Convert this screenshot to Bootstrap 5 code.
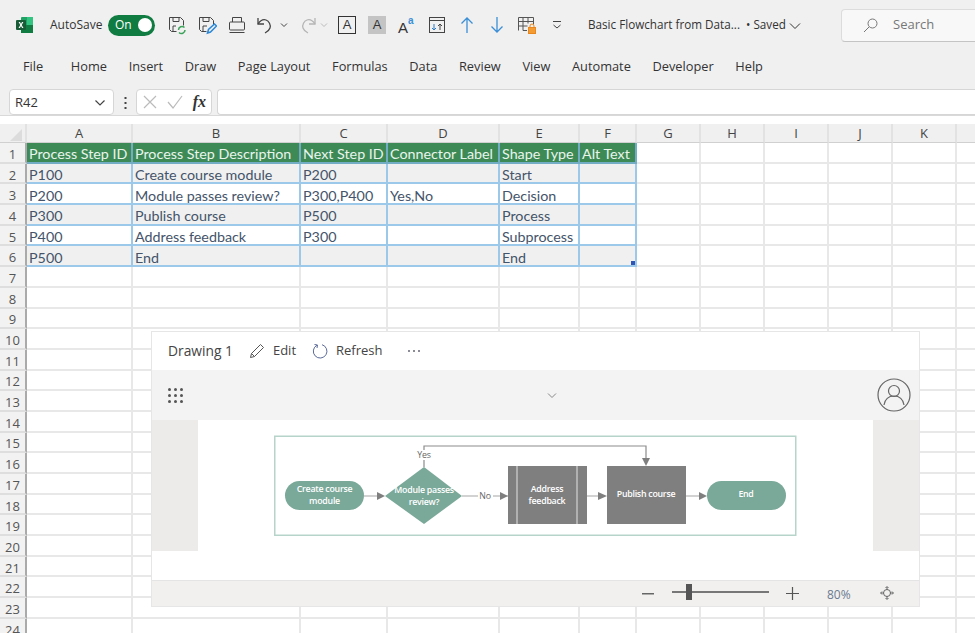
<!DOCTYPE html>
<html>

<head>
  <title>Basic Flowchart from Data</title>
  <link href="https://cdn.jsdelivr.net/npm/bootstrap@5.3.2/dist/css/bootstrap.min.css" rel="stylesheet">
  <script src="https://cdn.jsdelivr.net/npm/bootstrap@5.3.2/dist/js/bootstrap.bundle.min.js"></script>
  <style>
    html, body { height: 633px; overflow: hidden; }
    body { background: #f0f0f0; font-family: "Open Sans", "Noto Sans", sans-serif; color: #333; }

    .title-row { height: 48px; padding: 2px 0 0 16px; font-size: 12px; overflow: hidden; }
    .tb-cell { flex: none; width: 30px; display: flex; justify-content: center; align-items: center; }
    .tb-cell svg { display: block; flex: none; }
    .tb-small { width: 12px; }
    .tb-undo { width: 26px; }
    .tb-redo { width: 26px; margin-left: 5px; }
    .tb-redo-chev { width: 6px; margin-right: 5px; }
    .tb-group { margin-left: 7px; }
    .autosave-label { margin-left: 16px; width: 58px; flex: none; }
    .toggle-pill { flex: none; width: 47px; height: 21px; border-radius: 11px; background: #107c41; color: #fff; padding: 0 3px 0 7px; font-size: 12px; }
    .toggle-knob { width: 14px; height: 14px; border-radius: 50%; background: #fff; }
    .font-box { width: 18px; height: 18px; font-size: 13px; line-height: 16px; text-align: center; font-family: "Liberation Sans", sans-serif; color: #333; }
    .font-box-outline { border: 1px solid #333; }
    .font-box-filled { background: #c4c4c4; line-height: 18px; }
    .doc-name { margin-left: 16px; width: 253px; flex: none; white-space: nowrap; font-size: 11.700px; }
    .search-box { width: 140px; height: 33px; flex: none; background: #f8f8f8; border: 1px solid #dcdcdc; border-bottom-color: #c4c4c4; border-radius: 4px; color: #777; font-size: 13px; padding-left: 21px; gap: 14px; }

    .menu-row { height: 41px; padding: 0 0 4px 23px; gap: 21.600px; font-size: 12.800px; }
    .menu-row span:first-child { margin-right: 6px; }

    .formula-row { height: 27px; padding-left: 9px; border-bottom: 1px solid #d9d9d9; }
    .formula-box { background: #fff; border: 1px solid #d6d6d6; border-radius: 4px; height: 26px; }
    .name-box { width: 105px; padding: 2px 7px 0 5px; font-size: 13px; }
    .sep-dots { width: 22px; text-align: center; }
    .fx-box { width: 76px; padding: 0 5px 0 5px; }
    .fx-label { font-family: "Liberation Serif", serif; font-style: italic; font-weight: 700; font-size: 16px; color: #333; }
    .input-box { margin-left: 5px; flex: 1; border-right: 0; border-radius: 4px 0 0 4px; }

    .sheet-area { position: relative; background: #fff; height: 517px; padding-top: 8px; overflow: hidden; }
    .sheet { table-layout: fixed; border-collapse: separate; border-spacing: 0; width: 1021px; font-family: "Lato", "Open Sans", sans-serif; font-size: 14.300px; color: #44546a; }
    .sheet th, .sheet td { height: 20.700px; padding: 4px 0 0 2px; border-right: 2px solid #e8e8e8; border-bottom: 2px solid #e8e8e8; white-space: nowrap; overflow: hidden; line-height: 1; font-weight: 400; }
    .sheet thead th { height: 19px; background: #f0f0f0; color: #444; text-align: center; padding: 1px 0 0; border-bottom: 1px solid #d0d0d0; border-right-color: #e2e2e2; font-family: "Open Sans", sans-serif; font-size: 13px; }
    .sheet .row-head { background: #f2f2f2; color: #555; text-align: center; padding: 4px 0 0; border-right: 2px solid #aaa; border-bottom-color: #dedede; font-family: "Open Sans", sans-serif; font-size: 13px; font-weight: 500; }
    .sheet .data-cell { border-right: 2px solid #9cc8ea; border-bottom: 2px solid #9cc8ea; }
    .sheet .hdr-cell { background: #3d8a57; color: #e9f5ec; border-right: 2px solid #73acc5; border-bottom: 2px solid #73acc5; }
    .sheet .band-cell { background: #f0f0f0; }
    .corner-cell { position: relative; }
    .corner-handle { position: absolute; right: 0; bottom: 0; width: 4px; height: 4px; background: #2f55b5; }

    .drawing-panel { position: absolute; left: 151px; top: 215px; width: 769px; height: 276px; background: #fff; border: 1px solid #e6e6e6; color: #444; font-size: 13px; display: flex; flex-direction: column; }
    .panel-head { height: 38px; padding-left: 16px; flex: none; }
    .panel-title { font-size: 13.800px; }
    .panel-bar { height: 50px; background: #f3f3f3; flex: none; padding: 0 8px 0 16px; }
    .bar-chevron { margin-left: 44px; }
    .launcher { width: 15px; height: 15px; display: grid; grid-template-columns: repeat(3, 3px); gap: 3px; }
    .launcher i { width: 3px; height: 3px; border-radius: 50%; background: #555; }
    .canvas-area { height: 131px; flex: none; }
    .canvas-side { width: 46px; background: #ecebe9; flex: none; }
    .canvas-mid { flex: 1; }
    .canvas-gap { height: 29px; flex: none; }
    .panel-foot { flex: 1; background: #f1f0ef; border-top: 1px solid #e4e4e4; color: #6b7a90; font-size: 12px; }
    .foot-minus { left: 490px; top: 12px; }
    .foot-plus { left: 634px; top: 6px; }
    .foot-pct { left: 675px; top: 5px; }
    .foot-fit { left: 728px; top: 5px; }
    .zoom-track { position: absolute; left: 520px; top: 259px; width: 97px; height: 2px; background: #777; }
    .zoom-thumb { position: absolute; left: 14px; top: -7px; width: 6px; height: 16px; background: #555; }
    .flow-svg { position: absolute; left: 123px; top: 104px; overflow: visible; }
    .flow-svg text { font-family: "Open Sans", sans-serif; font-size: 8.800px; letter-spacing: -0.250px; }
    .flow-white text { font-weight: 600; }
  </style>
</head>

<body>
  <header>
    <div class="title-row d-flex align-items-center">
      <svg width="18" height="18" viewBox="0 0 18 18" class="flex-shrink-0">
        <rect x="5" y="1" width="12" height="16" rx="1" fill="#21a366" />
        <rect x="11" y="1" width="6" height="8" fill="#33c481" />
        <rect x="5" y="9" width="12" height="8" fill="#107c41" />
        <rect x="0" y="4" width="10" height="10" rx="1" fill="#185c37" />
        <path d="M2.6 6l1.7 3-1.8 3h1.400l1.100-2 1.100 2h1.400L5.700 9l1.700-3H6l-1 1.900L4 6z" fill="#fff" />
      </svg>
      <span class="autosave-label">AutoSave</span>
      <div class="toggle-pill d-flex align-items-center justify-content-between"><span>On</span><span class="toggle-knob"></span></div>
      <div class="tb-group d-flex align-items-center flex-shrink-0">
        <span class="tb-cell">
          <svg width="20" height="20" viewBox="0 0 20 20" fill="none" stroke="#444"><path d="M2.500 2.500h11l3 3v5M2.500 2.500v12l2 2h5" /><path d="M6 2.500v4h6v-4M6 16v-5h3" /><path d="M11.500 15a3.500 3.500 0 0 1 6-2.500M18 15a3.500 3.500 0 0 1-6 2.500" stroke="#3da35a" stroke-width="1.500" /></svg>
        </span>
        <span class="tb-cell">
          <svg width="20" height="20" viewBox="0 0 20 20" fill="none" stroke="#444"><path d="M2.500 2.500h11l3 3v4M2.500 2.500v12l2 2h5" /><path d="M6 2.500v4h6v-4M6 16v-5h4" /><path d="M10.500 18l1-3.500 6-5.500 2 2-6 6z" stroke="#2b88d8" stroke-width="1.500" /></svg>
        </span>
        <span class="tb-cell">
          <svg width="20" height="20" viewBox="0 0 20 20" fill="none" stroke="#444"><path d="M5.500 7V2.500h9V7" /><rect x="2.500" y="7" width="15" height="8" rx="1" /><path d="M2.500 17.500h15" /></svg>
        </span>
        <span class="tb-cell tb-undo">
          <svg width="20" height="20" viewBox="0 0 20 20" fill="none" stroke="#444" stroke-width="1.300"><path d="M3 3v6h6" /><path d="M3 9c2-3 5-5 8-4s5 5 4 8-3 4-5 5" /></svg>
        </span>
        <span class="tb-cell tb-small">
          <svg width="8" height="8" viewBox="0 0 8 8" fill="none" stroke="#444"><path d="M1 2.500l3 3 3-3" /></svg>
        </span>
        <span class="tb-cell tb-redo">
          <svg width="20" height="20" viewBox="0 0 20 20" fill="none" stroke="#b5b5b5" stroke-width="1.300"><path d="M17 3v6h-6" /><path d="M17 9c-2-3-5-5-8-4s-5 5-4 8 3 4 5 5" /></svg>
        </span>
        <span class="tb-cell tb-redo-chev">
          <svg width="8" height="8" viewBox="0 0 8 8" fill="none" stroke="#bbb"><path d="M1 2.500l3 3 3-3" /></svg>
        </span>
        <span class="tb-cell"><span class="font-box font-box-outline">A</span></span>
        <span class="tb-cell"><span class="font-box font-box-filled">A</span></span>
        <span class="tb-cell"><svg width="20" height="20" viewBox="0 0 20 20"><text x="1" y="18" font-family="Liberation Sans" font-size="15" fill="#333">A</text><text x="11" y="9" font-family="Liberation Sans" font-size="10" font-weight="700" fill="#3a8fd6">a</text></svg></span>
        <span class="tb-cell">
          <svg width="20" height="20" viewBox="0 0 20 20" fill="none" stroke="#444"><rect x="2.500" y="2.500" width="15" height="15" /><path d="M2.500 5.500h15" /><path d="M7 9v6M5 13l2 2 2-2" stroke="#2b7cc4" /><path d="M13 15V9M11 11l2-2 2 2" /></svg>
        </span>
        <span class="tb-cell">
          <svg width="18" height="20" viewBox="0 0 18 20" fill="none" stroke="#3a8fd6" stroke-width="1.300"><path d="M9 18V3M3.500 8.500L9 3l5.500 5.500" /></svg>
        </span>
        <span class="tb-cell">
          <svg width="18" height="20" viewBox="0 0 18 20" fill="none" stroke="#3a8fd6" stroke-width="1.300"><path d="M9 2v15M3.500 11.500L9 17l5.500-5.500" /></svg>
        </span>
        <span class="tb-cell">
          <svg width="20" height="20" viewBox="0 0 20 20" fill="none" stroke="#555"><path d="M1.500 15.500v-13h15v7M1.500 6.500h15M1.500 11h9M6 2.500v13h4M11 2.500v6" /><rect x="11.500" y="12.500" width="7" height="6" fill="#f39c34" stroke="#e8871e" /><path d="M13 12.500v-1.500a2 2 0 0 1 4 0v1.500" stroke="#e8871e" /></svg>
        </span>
        <span class="tb-cell">
          <svg width="12" height="10" viewBox="0 0 12 10" fill="none" stroke="#444"><path d="M2 1.500h8M2.500 5l3.500 3 3.500-3" /></svg>
        </span>
      </div>
      <span class="doc-name">Basic Flowchart from Data... &nbsp;• Saved
        <svg width="12" height="8" viewBox="0 0 12 8" fill="none" stroke="#333"><path d="M1 1.500l5 5 5-5" /></svg>
      </span>
      <div class="search-box d-flex align-items-center">
        <svg width="16" height="16" viewBox="0 0 16 16" fill="none" stroke="#777"><circle cx="9.500" cy="6.500" r="4.500" /><path d="M6 10l-5 5" /></svg>
        <span>Search</span>
      </div>
    </div>
    <nav class="menu-row d-flex align-items-center">
      <span>File</span><span>Home</span><span>Insert</span><span>Draw</span><span>Page Layout</span><span>Formulas</span><span>Data</span><span>Review</span><span>View</span><span>Automate</span><span>Developer</span><span>Help</span>
    </nav>
    <div class="formula-row d-flex align-items-start">
      <div class="formula-box name-box d-flex align-items-center justify-content-between">
        <span>R42</span>
        <svg width="12" height="8" viewBox="0 0 12 8" fill="none" stroke="#444" stroke-width="1.200"><path d="M1.500 1.500L6 6l4.500-4.500" /></svg>
      </div>
      <div class="sep-dots d-flex flex-column align-items-center justify-content-center gap-1 h-100">
        <svg width="3" height="13" viewBox="0 0 3 13" fill="#444"><rect x="0.500" y="1" width="2" height="2" /><rect x="0.500" y="6" width="2" height="2" /><rect x="0.500" y="11" width="2" height="2" /></svg>
      </div>
      <div class="formula-box fx-box d-flex align-items-center justify-content-between">
        <svg width="16" height="16" viewBox="0 0 16 16" fill="none" stroke="#bbb" stroke-width="1.200"><path d="M2 2l12 12M14 2L2 14" /></svg>
        <svg width="18" height="16" viewBox="0 0 18 16" fill="none" stroke="#bbb" stroke-width="1.200"><path d="M2 8l5 6L16 2" /></svg>
        <span class="fx-label">fx</span>
      </div>
      <div class="formula-box input-box"></div>
    </div>
  </header>

  <main class="sheet-area">
    <table class="sheet">
      <colgroup>
        <col style="width:27px"><col style="width:106px"><col style="width:168px"><col style="width:87px"><col style="width:112px"><col style="width:80px"><col style="width:57px"><col style="width:64px"><col style="width:64px"><col style="width:64px"><col style="width:64px"><col style="width:64px"><col style="width:64px">
      </colgroup>
      <thead>
        <tr><th><svg width="14" height="14" viewBox="0 0 14 14" class="d-block ms-2"><path d="M14 2v12H2z" fill="#dcdcdc" /></svg></th><th>A</th><th>B</th><th>C</th><th>D</th><th>E</th><th>F</th><th>G</th><th>H</th><th>I</th><th>J</th><th>K</th><th></th></tr>
      </thead>
      <tbody id="sheetBody"></tbody>
    </table>

    <section class="drawing-panel">
      <div class="panel-head d-flex align-items-center">
        <span class="panel-title">Drawing 1</span>
        <svg class="ms-3" width="16" height="16" viewBox="0 0 16 16" fill="none" stroke="#555"><path d="M1.500 14.500l1-4L11.500 1.500l3 3-9 9z" /><path d="M2.500 10.500l3 3" /></svg>
        <span class="ms-2">Edit</span>
        <svg class="ms-3" width="16" height="16" viewBox="0 0 16 16" fill="none" stroke="#5b6b9a"><path d="M5 2.200A6.800 6.800 0 1 0 10 1.700" /><path d="M2.500 1.500L5.500 2l-.5 3" /></svg>
        <span class="ms-2">Refresh</span>
        <svg class="ms-4" width="14" height="4" viewBox="0 0 14 4" fill="#667"><circle cx="2" cy="2" r="1" /><circle cx="7" cy="2" r="1" /><circle cx="12" cy="2" r="1" /></svg>
      </div>
      <div class="panel-bar d-flex align-items-center justify-content-between">
        <div class="launcher"><i></i><i></i><i></i><i></i><i></i><i></i><i></i><i></i><i></i></div>
        <svg class="bar-chevron" width="10" height="7" viewBox="0 0 10 7" fill="none" stroke="#888"><path d="M1 1.500l4 4 4-4" /></svg>
        <svg width="34" height="34" viewBox="0 0 34 34" fill="none" stroke="#666" stroke-width="1.200"><circle cx="17" cy="17" r="16" /><circle cx="17" cy="13" r="5.500" /><path d="M7 27c1-6 5-9 10-9s9 3 10 9" /></svg>
      </div>
      <div class="canvas-area d-flex">
        <div class="canvas-side"></div>
        <div class="canvas-mid"></div>
        <div class="canvas-side"></div>
      </div>
      <div class="canvas-gap"></div>
      <div class="panel-foot d-flex align-items-center position-relative">
        <svg class="position-absolute foot-minus" width="12" height="2" viewBox="0 0 12 2"><rect width="12" height="1.500" fill="#666" /></svg>
        <svg class="position-absolute foot-plus" width="13" height="13" viewBox="0 0 13 13" fill="none" stroke="#555" stroke-width="1.200"><path d="M6.500 0v13M0 6.500h13" /></svg>
        <span class="position-absolute foot-pct">80%</span>
        <svg class="position-absolute foot-fit" width="14" height="14" viewBox="0 0 14 14" fill="none" stroke="#666"><circle cx="7" cy="7" r="3.500" /><path d="M7 1v3M7 10v3M1 7h3M10 7h3" /><path d="M5.500 2L7 .5 8.500 2M5.500 12L7 13.500 8.500 12M2 5.500L.5 7 2 8.500M12 5.500L13.500 7 12 8.500" /></svg>
      </div>
      <div class="zoom-track"><div class="zoom-thumb"></div></div>

      <svg class="flow-svg" width="523" height="101" viewBox="0 0 523 101">
        <rect x="-0.250" y="0.250" width="521" height="99" fill="#fff" stroke="#b6d4ca" stroke-width="1.500" />
        <!-- connectors -->
        <g fill="none" stroke="#a6a6a6" stroke-width="1.200">
          <path d="M89 60h14M187 60h16M218 60h15M312 60h14M411 60h15" />
          <path d="M149 31V10h222v14" stroke="#8c8c8c" />
        </g>
        <g fill="#7f7f7f">
          <path d="M102 56l8 4-8 4zM225 56l8 4-8 4zM323 56l9 4-9 4zM424 56l8 4-8 4zM367 22h8l-4 8z" />
        </g>
        <!-- shapes -->
        <rect x="10" y="45" width="79" height="29" rx="14.500" fill="#7aa899" />
        <path d="M110 60l39-29 38 29-38 28z" fill="#7aa899" />
        <rect x="233" y="30" width="79" height="58" fill="#7f7f7f" />
        <path d="M242 30v58M302 30v58" stroke="#e4e4e4" />
        <rect x="332" y="30" width="79" height="58" fill="#7f7f7f" />
        <rect x="432" y="45" width="79" height="29" rx="14.500" fill="#7aa899" />
        <!-- labels -->
        <g class="flow-white" fill="#fff" text-anchor="middle">
          <text x="49.500" y="55.500">Create course</text>
          <text x="49.500" y="67.500">module</text>
          <text x="149" y="56.500">Module passes</text>
          <text x="149" y="68.500">review?</text>
          <text x="272" y="55.500">Address</text>
          <text x="272" y="67.500">feedback</text>
          <text x="371" y="61">Publish course</text>
          <text x="471" y="61">End</text>
        </g>
        <rect x="140" y="14" width="18" height="10" fill="#fff" />
        <g fill="#666" text-anchor="middle">
          <text x="149" y="22">Yes</text>
          <text x="210" y="63">No</text>
        </g>
      </svg>
    </section>
  </main>

  <script>
    const sheetRows = [
      ["Process Step ID", "Process Step Description", "Next Step ID", "Connector Label", "Shape Type", "Alt Text"],
      ["P100", "Create course module", "P200", "", "Start", ""],
      ["P200", "Module passes review?", "P300,P400", "Yes,No", "Decision", ""],
      ["P300", "Publish course", "P500", "", "Process", ""],
      ["P400", "Address feedback", "P300", "", "Subprocess", ""],
      ["P500", "End", "", "", "End", ""]
    ];

    const sheetBody = document.querySelector("#sheetBody");

    for (let r = 0; r < 24; r++) {
      const tr = document.createElement("tr");
      const head = document.createElement("td");
      head.className = "row-head";
      head.textContent = r + 1;
      tr.appendChild(head);

      for (let c = 0; c < 12; c++) {
        const td = document.createElement("td");
        if (r < sheetRows.length && c < 6) {
          td.textContent = sheetRows[r][c];
          td.className = r === 0 ? "hdr-cell" : "data-cell";
          if (r > 0 && r % 2 === 1) td.classList.add("band-cell");
          if (r === 5 && c === 5) {
            td.classList.add("corner-cell");
            td.innerHTML = '<span class="corner-handle"></span>';
          }
        }
        tr.appendChild(td);
      }
      sheetBody.appendChild(tr);
    }
  </script>
</body>

</html>
